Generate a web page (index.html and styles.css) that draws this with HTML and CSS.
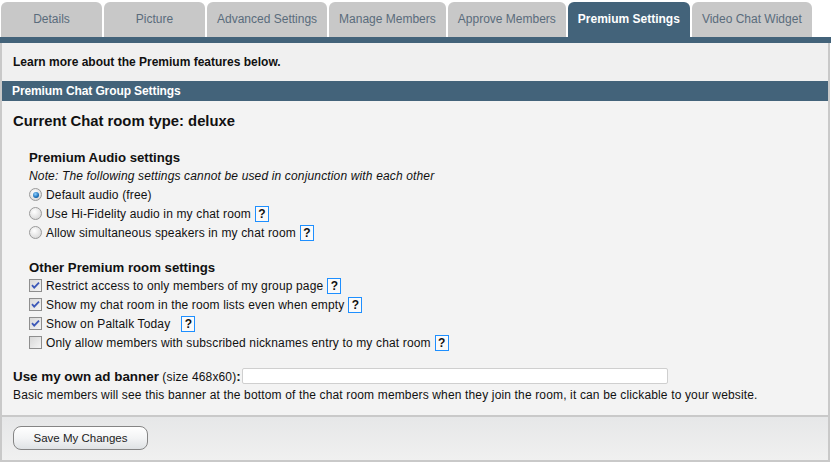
FILE: index.html
```html
<!DOCTYPE html>
<html>
<head>
<meta charset="utf-8">
<link rel="stylesheet" href="styles.css">
</head>
<body>
<div class="page">
  <div class="tabs">
    <div class="tab">Details</div>
    <div class="tab">Picture</div>
    <div class="tab">Advanced Settings</div>
    <div class="tab">Manage Members</div>
    <div class="tab">Approve Members</div>
    <div class="tab active">Premium Settings</div>
    <div class="tab">Video Chat Widget</div>
  </div>
  <div class="stripe"></div>
  <div class="panel">
    <div class="intro">Learn more about the Premium features below.</div>
    <div class="bar">Premium Chat Group Settings</div>
    <div class="content">
      <div class="roomtype">Current Chat room type: deluxe</div>

      <div class="group">
        <div class="gtitle">Premium Audio settings</div>
        <div class="note">Note: The following settings cannot be used in conjunction with each other</div>
        <div class="row"><span class="radio on"></span>Default audio (free)</div>
        <div class="row"><span class="radio"></span>Use Hi-Fidelity audio in my chat room<span class="help">?</span></div>
        <div class="row"><span class="radio"></span>Allow simultaneous speakers in my chat room<span class="help">?</span></div>
      </div>

      <div class="group group2">
        <div class="gtitle">Other Premium room settings</div>
        <div class="row crow"><span class="check"><svg viewBox="0 0 13 13" width="13" height="13"><path d="M3 6.2 L5.2 8.6 L10 3.6" fill="none" stroke="#3c58b8" stroke-width="1.8"/></svg></span>Restrict access to only members of my group page<span class="help">?</span></div>
        <div class="row crow"><span class="check"><svg viewBox="0 0 13 13" width="13" height="13"><path d="M3 6.2 L5.2 8.6 L10 3.6" fill="none" stroke="#3c58b8" stroke-width="1.8"/></svg></span>Show my chat room in the room lists even when empty<span class="help">?</span></div>
        <div class="row crow"><span class="check"><svg viewBox="0 0 13 13" width="13" height="13"><path d="M3 6.2 L5.2 8.6 L10 3.6" fill="none" stroke="#3c58b8" stroke-width="1.8"/></svg></span>Show on Paltalk Today &nbsp;<span class="help">?</span></div>
        <div class="row crow"><span class="check"></span>Only allow members with subscribed nicknames entry to my chat room<span class="help">?</span></div>
      </div>

      <div class="banner"><span class="blabel">Use my own ad banner</span> <span class="bsize">(size 468x60)</span><span class="blabel">:</span><span class="binput"></span></div>
      <div class="bnote">Basic members will see this banner at the bottom of the chat room members when they join the room, it can be clickable to your website.</div>
    </div>
    <div class="footer">
      <button class="save">Save My Changes</button>
    </div>
  </div>
</div>
</body>
</html>
```

FILE: styles.css
```css
html, body {
  margin: 0;
  padding: 0;
  background: #ffffff;
}
body {
  font-family: "Liberation Sans", Arial, sans-serif;
  font-size: 12px;
  color: #111;
  letter-spacing: 0.15px;
}
.page {
  width: 831px;
}
.tabs {
  display: flex;
  gap: 2px;
  padding: 2px 0 0 1px;
  height: 35px;
}
.tab {
  min-width: 81px;
  padding: 0 10px;
  height: 35px;
  line-height: 35px;
  text-align: center;
  background: #c8c8c8;
  color: #5a6c7c;
  border-radius: 6px 6px 0 0;
  font-size: 12px;
  white-space: nowrap;
  letter-spacing: 0;
}
.tab.active {
  background: #43637a;
  color: #fff;
  font-weight: bold;
}
.stripe {
  height: 6px;
  background: #43637a;
}
.panel {
  width: 826px;
  border-left: 2px solid #c9c9c9;
  border-right: 2px solid #c9c9c9;
  border-bottom: 2px solid #c9c9c9;
  background: #f0f0f0;
}
.intro {
  padding: 12px 11px;
  line-height: 14px;
  font-weight: bold;
  letter-spacing: 0;
}
.bar {
  height: 20px;
  line-height: 20px;
  background: #43637a;
  color: #fff;
  font-weight: bold;
  padding-left: 10px;
  letter-spacing: -0.1px;
}
.content {
  background: #f3f3f3;
  padding: 11px;
}
.roomtype {
  font-size: 14.8px;
  font-weight: bold;
  line-height: 18px;
  letter-spacing: 0;
}
.group {
  margin-top: 20px;
  padding-left: 16px;
}
.group2 {
  margin-top: 18px;
}
.gtitle {
  font-size: 13.2px;
  font-weight: bold;
  line-height: 16px;
  letter-spacing: 0;
}
.note {
  font-style: italic;
  line-height: 18px;
  margin-top: 1px;
}
.row {
  display: flex;
  align-items: center;
  height: 19px;
}
.radio {
  width: 11px;
  height: 11px;
  border: 1px solid #9a9a9a;
  border-radius: 50%;
  background: radial-gradient(circle at 40% 35%, #ffffff 0%, #e2e2e2 60%, #cfcfcf 100%);
  margin-right: 4px;
  flex: none;
  position: relative;
}
.radio.on::after {
  content: "";
  position: absolute;
  left: 2.5px;
  top: 2.5px;
  width: 6px;
  height: 6px;
  border-radius: 50%;
  background: radial-gradient(circle at 40% 35%, #8fd0ff 0%, #1a6fb8 60%, #0d3f73 100%);
}
.check {
  width: 11px;
  height: 11px;
  border: 1px solid #8e8e8e;
  background: linear-gradient(135deg, #d8d8d8 0%, #f4f4f4 100%);
  margin-right: 4px;
  flex: none;
  display: flex;
  align-items: center;
  justify-content: center;
  overflow: hidden;
}
.check svg {
  flex: none;
}
.help {
  display: inline-block;
  width: 12px;
  height: 14px;
  line-height: 14px;
  border: 1px solid #1e8fff;
  text-align: center;
  font-weight: bold;
  color: #111;
  margin-left: 4px;
  background: #fafafa;
  letter-spacing: 0;
}
.banner {
  margin-top: 16px;
  height: 18px;
  line-height: 18px;
  white-space: nowrap;
}
.blabel {
  font-weight: bold;
  font-size: 13.4px;
  letter-spacing: 0;
}
.bsize {
  font-size: 12px;
}
.binput {
  display: inline-block;
  vertical-align: top;
  width: 424px;
  height: 14px;
  border: 1px solid #cfcfcf;
  border-radius: 2px;
  background: #fff;
  margin-left: 1px;
}
.bnote {
  line-height: 18px;
}
.footer {
  border-top: 2px solid #c9c9c9;
  background: linear-gradient(#e6e7e8, #f0f0f0);
  padding: 9px 11px 10px;
  height: 24px;
}
.save {
  width: 135px;
  height: 24px;
  border: 1px solid #858585;
  border-radius: 8px;
  background: linear-gradient(#ffffff 0%, #f3f4f5 50%, #dfe2e5 100%);
  font-family: "Liberation Sans", Arial, sans-serif;
  font-size: 11.5px;
  color: #222;
  padding: 0;
  letter-spacing: 0;
}
```
